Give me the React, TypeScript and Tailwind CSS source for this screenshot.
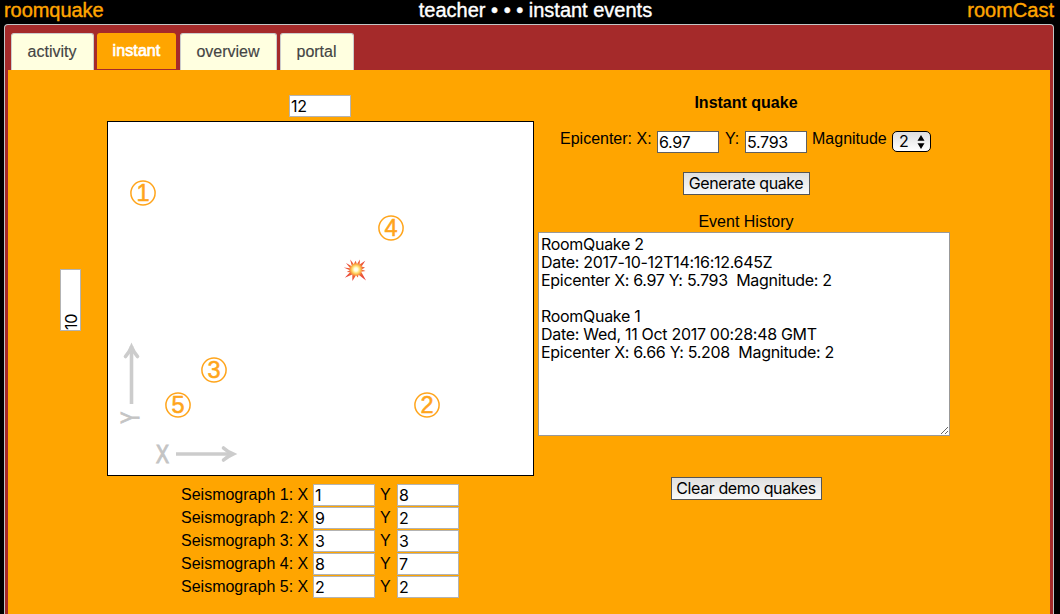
import React from "react";

const sans = "font-['Liberation_Sans',Arial,sans-serif]";
const ui = "font-['Inter','Liberation_Sans',sans-serif]";

function Field({ value, dark = false }: { value: string; dark?: boolean }) {
  return (
    <input
      defaultValue={value}
      className={`${ui} block h-[22px] w-[62px] shrink-0 border bg-white pb-px pl-px text-[16px] leading-[18px] tracking-[-0.3px] text-black outline-none ${
        dark ? "border-[#606060]" : "border-[#b3b3b3]"
      }`}
    />
  );
}

function Tab({ label, width }: { label: string; width: string }) {
  return (
    <div
      className={`${width} h-[37px] rounded-t-[3px] border border-b-0 border-[#ccc] bg-[#ffffe0] pr-px text-center text-[16px] leading-[36px] text-[#444] [-webkit-text-stroke:0.15px_#444]`}
    >
      {label}
    </div>
  );
}

function Marker({ n, place }: { n: number; place: string }) {
  return (
    <svg className={`absolute ${place}`} width="28" height="28" viewBox="0 0 28 28">
      <circle cx="14" cy="14" r="12.1" fill="none" stroke="#ffa51c" strokeWidth="1.5" />
      <text
        x="14"
        y="22.4"
        textAnchor="middle"
        fontSize="23.5"
        fontFamily="Liberation Sans, Arial, sans-serif"
        fill="#ffa51c"
        stroke="#ffa51c"
        strokeWidth="0.55"
      >
        {n}
      </text>
    </svg>
  );
}

function Burst() {
  return (
    <svg className="absolute left-[235px] top-[136px]" width="24" height="24" viewBox="0 0 24 24">
      <defs>
        <radialGradient id="burst" gradientUnits="userSpaceOnUse" cx="13" cy="11.5" r="11">
          <stop offset="0" stopColor="#fff" />
          <stop offset=".16" stopColor="#fffde0" />
          <stop offset=".32" stopColor="#ffe27a" />
          <stop offset=".48" stopColor="#fbab45" />
          <stop offset=".64" stopColor="#ee6237" />
          <stop offset="1" stopColor="#e8423a" />
        </radialGradient>
      </defs>
      <path
        fill="url(#burst)"
        d="M7.2 1.5 10.8 6.2 12.5 2.8 14 6 17 1.5 16.6 6.5 22.3 2.8 18.6 8.5 22 9.5 18.7 11.5 22.5 13 18.2 13.8 23 22.5 15.6 16.8 14.8 19.5 13 17.2 9.4 23 9.3 16.6 1.8 19.8 7 14.3 3.8 14 6.8 12.2 .8 9.6 7.2 10.2 3 5 8.8 8.2Z"
      />
    </svg>
  );
}

function Axes() {
  return (
    <svg
      className="absolute left-0 top-[213px]"
      width="140"
      height="140"
      viewBox="0 0 140 140"
      fontFamily="Liberation Sans, Arial, sans-serif"
      fontSize="25"
    >
      <g fill="none" stroke="#ccc" strokeWidth="3.6">
        <path d="M23.5 69V11" />
        <path strokeLinecap="round" d="M17.5 21.5Q20.8 18 23.5 12 26.2 18 29.5 21.5" />
        <path d="M68 119h57" />
        <path strokeLinecap="round" d="M115.5 113Q119 116.3 125 119 119 121.7 115.5 125" />
      </g>
      <g fill="#c4c4c4" stroke="#c4c4c4" strokeWidth="1.1" textAnchor="middle">
        <text x="54.5" y="127.7" textLength="13" lengthAdjust="spacingAndGlyphs">
          X
        </text>
        <text transform="translate(30.6 82.7) rotate(-90)" textLength="12" lengthAdjust="spacingAndGlyphs">
          Y
        </text>
      </g>
    </svg>
  );
}

const stations = [
  [1, 8],
  [9, 2],
  [3, 3],
  [8, 7],
  [2, 2],
];

const history = `RoomQuake 2
Date: 2017-10-12T14:16:12.645Z
Epicenter X: 6.97 Y: 5.793  Magnitude: 2

RoomQuake 1
Date: Wed, 11 Oct 2017 00:28:48 GMT
Epicenter X: 6.66 Y: 5.208  Magnitude: 2`;

export default function App() {
  return (
    <div className={`${sans} flex h-[614px] w-[1060px] flex-col overflow-hidden bg-black text-[16px] text-black`}>
      <header className="grid h-[24px] shrink-0 grid-cols-3 px-[4px] text-[20px] leading-[20px] text-[#ffa500] [-webkit-text-stroke:0.4px_currentColor]">
        <div className="tracking-[-0.05px]">roomquake</div>
        <div className="whitespace-nowrap pl-[14px] text-center text-white">
          <span className="-ml-[3px]">teacher • • • instant events</span>
        </div>
        <div className="pr-[2px] text-right">roomCast</div>
      </header>

      <main className="ml-[4px] flex h-[590px] w-[1050px] shrink-0 flex-col rounded-t-[4px] border border-b-0 border-[#c4c4c4] bg-[#a52a2a] px-[3px] pt-[8px]">
        <nav className="flex h-[37px] shrink-0 pl-[3px]">
          <Tab label="activity" width="w-[83px]" />
          <div className="ml-[3px] h-[36px] w-[79px] rounded-t-[3px] bg-[#ffa500] text-center text-[16px] leading-[35px] tracking-[0.1px] text-white [-webkit-text-stroke:0.7px_#fff]">
            instant
          </div>
          <div className="w-[4px]" />
          <Tab label="overview" width="w-[97px]" />
          <div className="w-[3px]" />
          <Tab label="portal" width="w-[74px]" />
        </nav>

        <div className="flex flex-1 bg-[#ffa500]">
          <section className="flex w-[530px] shrink-0 flex-col">
            <div className="pl-[281px] pt-[25px]">
              <Field value="12" />
            </div>
            <div className="mt-[4px] flex h-[355px]">
              <div className="flex w-[99px] shrink-0 pl-[52px] pt-[148px]">
                <div className={`${ui} h-[62px] w-[21px] rotate-180 border border-[#b3b3b3] bg-white text-[16px] leading-[21px] tracking-[-0.3px] [writing-mode:vertical-rl]`}>
                  10
                </div>
              </div>
              <div className="relative h-[355px] w-[427px] shrink-0 border border-black bg-white">
                <Marker n={1} place="left-[21px] top-[57px]" />
                <Marker n={2} place="left-[305px] top-[269px]" />
                <Marker n={3} place="left-[92px] top-[234px]" />
                <Marker n={4} place="left-[269px] top-[92px]" />
                <Marker n={5} place="left-[56px] top-[269px]" />
                <Burst />
                <Axes />
              </div>
            </div>
            <div className="mt-[8px] flex flex-col gap-px pl-[173px]">
              {stations.map(([x, y], i) => (
                <div key={i} className="flex h-[22px] items-center leading-[22px]">
                  <span className="w-[132px] whitespace-nowrap">Seismograph {i + 1}: X</span>
                  <Field value={String(x)} />
                  <span className="w-[22px] pl-[5px]">Y</span>
                  <Field value={String(y)} />
                </div>
              ))}
            </div>
          </section>

          <section className="flex w-[412px] shrink-0 flex-col items-center">
            <h2 className="ml-[4px] mt-[23px] text-[16px] font-bold leading-[20px]">Instant quake</h2>
            <div className="mt-[18px] flex h-[22px] w-full pl-[22px] leading-[16px]">
              <span className="w-[97px] whitespace-nowrap">Epicenter: X:</span>
              <Field value="6.97" dark />
              <span className="w-[26px] pl-[6px]">Y:</span>
              <Field value="5.793" dark />
              <span className="w-[85px] pl-[5px]">Magnitude</span>
              <span className={`${ui} flex h-[21px] w-[39px] items-center rounded-[5px] border border-black bg-linear-to-b from-[#dedede] to-white pb-px pl-[6px]`}>
                2
                <svg className="ml-[8px] mt-px" width="8" height="14" viewBox="0 0 8 14">
                  <path d="M4 0 7.5 5.8H.5ZM4 14 .5 8.2h7Z" />
                </svg>
              </span>
            </div>
            <button className={`${ui} ml-[4px] mt-[19px] h-[23px] w-[127px] whitespace-nowrap border border-[#555] bg-linear-to-b from-[#dfdfdf] to-[#fafafa] text-[16px] leading-[19px] tracking-[-0.38px]`}>
              Generate quake
            </button>
            <div className="ml-[4px] mt-[17px] h-[20px] leading-[20px]">Event History</div>
            <textarea
              defaultValue={history}
              className={`${ui} block h-[204px] w-[412px] shrink-0 resize border border-[#999] bg-white px-[2px] py-[2px] text-[16px] leading-[18px] tracking-[-0.3px] text-black outline-none`}
            />
            <button className={`${ui} ml-[4px] mt-[41px] h-[23px] w-[151px] whitespace-nowrap border border-[#555] bg-linear-to-b from-[#dfdfdf] to-[#fafafa] text-[16px] leading-[19px] tracking-[-0.4px]`}>
              Clear demo quakes
            </button>
          </section>
        </div>
      </main>
    </div>
  );
}
